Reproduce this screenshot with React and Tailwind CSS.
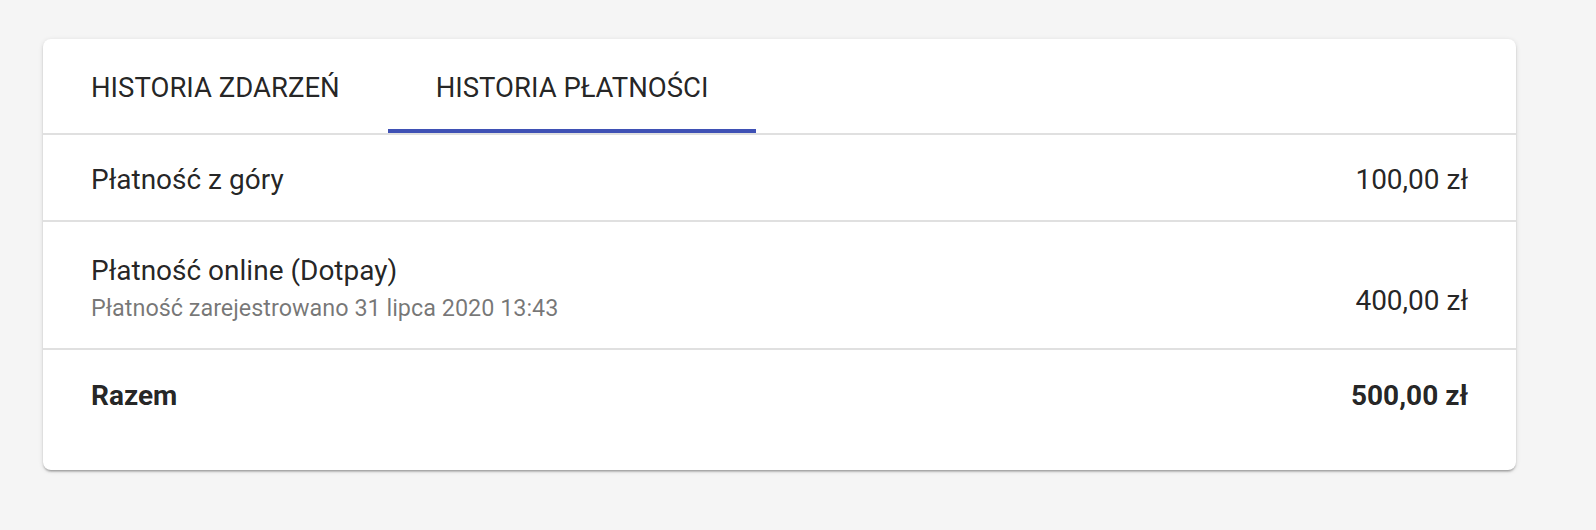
export default function App() {
  const rows = [
    { title: 'Płatność z góry', amount: '100,00 zł' },
    {
      title: 'Płatność online (Dotpay)',
      sub: 'Płatność zarejestrowano 31 lipca 2020 13:43',
      amount: '400,00 zł',
    },
  ]

  return (
    <div className="min-h-screen w-full bg-[#f5f5f5] pt-[39px] px-[43px] font-['Roboto',sans-serif] text-[rgba(0,0,0,0.87)]">
      <div className="w-[1473px] rounded-[8px] bg-white shadow-[0_2px_2px_rgba(0,0,0,0.14),0_3px_2px_-2px_rgba(0,0,0,0.2),0_1px_5px_rgba(0,0,0,0.12)] pb-[30px]">
        {/* Tabs */}
        <div className="flex border-b-2 border-[#e0e0e0]">
          <button className="h-[94px] px-[48px] pt-[3px] text-[27.5px] uppercase text-[rgba(0,0,0,0.87)]">
            Historia zdarzeń
          </button>
          <button className="relative h-[94px] px-[48px] pt-[3px] text-[27.5px] uppercase text-[rgba(0,0,0,0.87)]">
            Historia płatności
            <span className="absolute left-0 right-0 bottom-0 h-[4px] bg-[#3f51b5]"></span>
          </button>
        </div>

        {/* Rows */}
        <div className="flex items-center justify-between h-[87px] px-[48px] pt-[5px] border-b-2 border-[#e0e0e0] text-[28px]">
          <span>{rows[0].title}</span>
          <span>{rows[0].amount}</span>
        </div>
        <div className="flex items-end justify-between h-[128px] px-[48px] pb-[23px] border-b-2 border-[#e0e0e0]">
          <div className="flex flex-col">
            <span className="text-[28px] leading-[40px]">{rows[1].title}</span>
            <span className="text-[23.4px] leading-[34px] text-[rgba(0,0,0,0.54)]">{rows[1].sub}</span>
          </div>
          <span className="text-[28px] leading-[40px] mb-[4px]">{rows[1].amount}</span>
        </div>
        <div className="flex items-center justify-between h-[90px] px-[48px] pt-[2px] text-[28px] font-bold">
          <span>Razem</span>
          <span>500,00 zł</span>
        </div>
      </div>
    </div>
  )
}
